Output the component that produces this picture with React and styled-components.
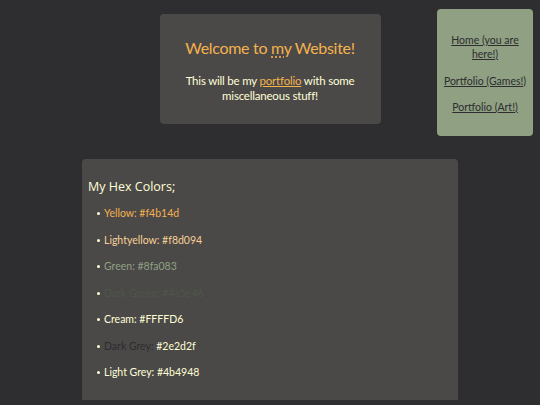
import React from "react";
import styled, { createGlobalStyle } from "styled-components";

const GlobalStyle = createGlobalStyle`
  html, body {
    margin: 0;
    padding: 0;
    background-color: #2e2d2f;
  }
  body {
    font-family: "Lato", "Open Sans", sans-serif;
    color: #ffffd6;
  }
`;

const Page = styled.div`
  width: 540px;
  min-height: 405px;
`;

const Top = styled.div`
  display: grid;
  grid-template-columns: 1fr 221px 1fr;
  align-items: start;
`;

const Header = styled.header`
  grid-column: 2;
  margin-top: 14px;
  height: 110px;
  box-sizing: border-box;
  background-color: #4b4948;
  border-radius: 4px;
  text-align: center;
  padding-top: 24px;
`;

const Title = styled.h1`
  margin: 0;
  font-size: 16px;
  letter-spacing: -0.3px;
  font-weight: 400;
  color: #f4b14d;
`;

const Abbr = styled.abbr`
  text-decoration: underline dotted;
  text-underline-offset: 3px;
`;

const Intro = styled.p`
  margin: 16px 0 0;
  font-size: 11.5px;
  letter-spacing: -0.2px;
  line-height: 15px;
  color: #ffffd6;
`;

const InlineLink = styled.a`
  color: #f4b14d;
  text-decoration: underline;
`;

const Nav = styled.nav`
  grid-column: 3;
  justify-self: end;
  margin: 9px 7px 0 0;
  width: 96px;
  height: 127px;
  box-sizing: border-box;
  background-color: #8fa083;
  border-radius: 4px;
  padding: 24px 2px 0;
  display: flex;
  flex-direction: column;
  align-items: center;
  gap: 12.5px;
  text-align: center;
`;

const NavLink = styled.a`
  font-family: "Lato", sans-serif;
  font-size: 10.5px;
  line-height: 14px;
  color: #2e2d2f;
  text-decoration: underline;
`;

const Colors = styled.section`
  width: 376px;
  margin: 23px auto 0;
  box-sizing: border-box;
  height: 241px;
  background-color: #4b4948;
  border-radius: 4px 4px 0 0;
  padding: 19px 6px 0;
`;

const Heading = styled.div`
  font-family: "Open Sans", sans-serif;
  font-size: 12.5px;
  color: #ffffd6;
`;

const List = styled.ul`
  margin: 11px 0 0;
  padding-left: 16px;
  list-style: none;
`;

const Item = styled.li`
  position: relative;
  font-family: "Lato", sans-serif;
  font-size: 10.5px;
  height: 26.5px;
  line-height: 14px;
  color: ${(p) => p.$color};

  &::before {
    content: "";
    position: absolute;
    left: -7px;
    top: 6px;
    width: 3px;
    height: 3px;
    border-radius: 50%;
    background: #ffffd6;
  }
`;

const Light = styled.span`
  color: #ffffd6;
`;

const colors = [
  { label: "Yellow: #f4b14d", color: "#f4b14d" },
  { label: "Lightyellow: #f8d094", color: "#f8d094" },
  { label: "Green: #8fa083", color: "#8fa083" },
  { label: "Dark Green: #4a5e46", color: "#4c5649" },
  { label: "Cream: #FFFFD6", color: "#ffffd6" },
];

const App = () => {
  return (
    <Page>
      <GlobalStyle />
      <Top>
        <Header>
          <Title>
            Welcome to <Abbr title="my">my</Abbr> Website!
          </Title>
          <Intro>
            This will be my <InlineLink href="#">portfolio</InlineLink> with some
            <br />
            miscellaneous stuff!
          </Intro>
        </Header>
        <Nav>
          <NavLink href="#">
            Home (you are
            <br />
            here!)
          </NavLink>
          <NavLink href="#">Portfolio (Games!)</NavLink>
          <NavLink href="#">Portfolio (Art!)</NavLink>
        </Nav>
      </Top>
      <Colors>
        <Heading>My Hex Colors;</Heading>
        <List>
          {colors.map((c) => (
            <Item key={c.label} $color={c.color}>
              {c.label}
            </Item>
          ))}
          <Item $color="#2e2d2f">
            Dark Grey: <Light>#2e2d2f</Light>
          </Item>
          <Item $color="#ffffd6">Light Grey: #4b4948</Item>
        </List>
      </Colors>
    </Page>
  );
};

export default App;
